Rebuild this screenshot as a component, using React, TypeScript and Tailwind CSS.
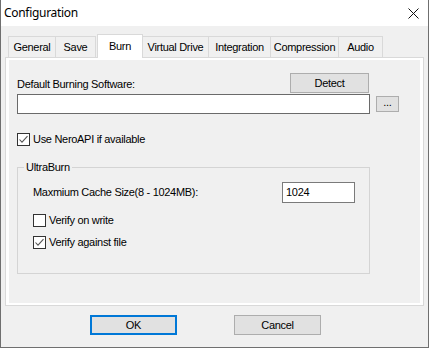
import type { ReactNode } from 'react'

const sys = "font-['Liberation_Sans',Arial,sans-serif] text-[11px] tracking-[-0.3px] text-black"
const btn = 'flex items-center justify-center bg-[#e1e1e1] border border-[#adadad]'

const tabs = [
  { label: 'General', cls: 'w-[48px] border-l' },
  { label: 'Save', cls: 'w-[40px]' },
  { label: 'Burn', cls: 'w-[46px] border-l ml-[1px]', active: true },
  { label: 'Virtual Drive', cls: 'w-[66px]' },
  { label: 'Integration', cls: 'w-[62px]' },
  { label: 'Compression', cls: 'w-[68px]' },
  { label: 'Audio', cls: 'w-[44px]' },
]

function Check({ checked, children }: { checked?: boolean; children: ReactNode }) {
  return (
    <div className="flex h-[13px] items-center">
      <span className="flex h-[13px] w-[13px] shrink-0 items-center justify-center border border-[#333333] bg-white">
        {checked && (
          <svg width="11" height="11" viewBox="0 0 11 11">
            <path d="M1.5 5.5 L4 8.2 L9.5 2.2" fill="none" stroke="#555555" strokeWidth="1.1" />
          </svg>
        )}
      </span>
      <span className="ml-[3px] leading-[13px]">{children}</span>
    </div>
  )
}

export default function App() {
  return (
    <div className={`flex h-[348px] w-[429px] flex-col border-x border-b border-[#6f6f6f] bg-[#f0f0f0] ${sys}`}>
      <div className="flex h-[26px] shrink-0 items-center justify-between bg-white pl-[3px] pr-[8px]">
        <span className="font-['Noto_Sans',sans-serif] text-[12px] tracking-[-0.3px] text-black">Configuration</span>
        <svg width="11" height="11" viewBox="0 0 11 11" className="mr-[1px]">
          <path d="M0.5 0.5 L10.5 10.5 M10.5 0.5 L0.5 10.5" stroke="#111111" strokeWidth="1" />
        </svg>
      </div>

      <div className="flex flex-1 flex-col px-[4px] pt-[8px]">
        <div className="ml-[3px] flex h-[23px] items-end">
          {tabs.map((t) =>
            t.active ? (
              <div
                key={t.label}
                className={`relative z-10 -mb-px flex h-[24px] items-start justify-center border-r border-t border-[#d9d9d9] bg-white pt-[3px] ${t.cls}`}
              >
                {t.label}
              </div>
            ) : (
              <div
                key={t.label}
                className={`flex h-[21px] items-center justify-center border-r border-t border-[#d9d9d9] bg-[#f0f0f0] pt-px ${t.cls}`}
              >
                {t.label}
              </div>
            ),
          )}
        </div>

        <div className="flex h-[249px] flex-col border border-[#d9d9d9] bg-white px-[3px] pb-[2px] pt-[2px]">
          <div className="flex flex-1 flex-col bg-[#f0f0f0] pl-[8px] pt-[13px]">
            <div className="flex h-[20px] w-[353px] items-center justify-between">
              <span className="pt-[2px]">Default Burning Software:</span>
              <button className={`${btn} mr-px h-[20px] w-[79px]`}>Detect</button>
            </div>
            <div className="mt-[1px] flex items-center">
              <div className="h-[20px] w-[353px] border border-[#6a6a6a] bg-white" />
              <button className={`${btn} ml-[6px] h-[16px] w-[23px] pb-[4px]`}>...</button>
            </div>

            <div className="mt-[19px]">
              <Check checked>Use NeroAPI if available</Check>
            </div>

            <div className="relative mt-[21px] h-[107px] w-[353px] border border-[#d4d4d4] pl-[15px] pr-[14px] pt-[14px]">
              <span className="absolute -top-[7px] left-[6px] bg-[#f0f0f0] px-[2px] leading-[13px]">UltraBurn</span>
              <div className="flex items-center justify-between">
                <span>Maxmium Cache Size(8 - 1024MB):</span>
                <div className="flex h-[21px] w-[73px] items-center border border-[#7a7a7a] bg-white pl-[3px]">1024</div>
              </div>
              <div className="mt-[11px]">
                <Check>Verify on write</Check>
              </div>
              <div className="mt-[9px]">
                <Check checked>Verify against file</Check>
              </div>
            </div>
          </div>
        </div>

        <div className="mt-[9px] flex gap-[57px] pl-[85px]">
          <button className="flex h-[20px] w-[87px] items-center justify-center border-2 border-[#0078d7] bg-[#e1e1e1]">OK</button>
          <button className={`${btn} h-[20px] w-[87px]`}>Cancel</button>
        </div>
      </div>
    </div>
  )
}
